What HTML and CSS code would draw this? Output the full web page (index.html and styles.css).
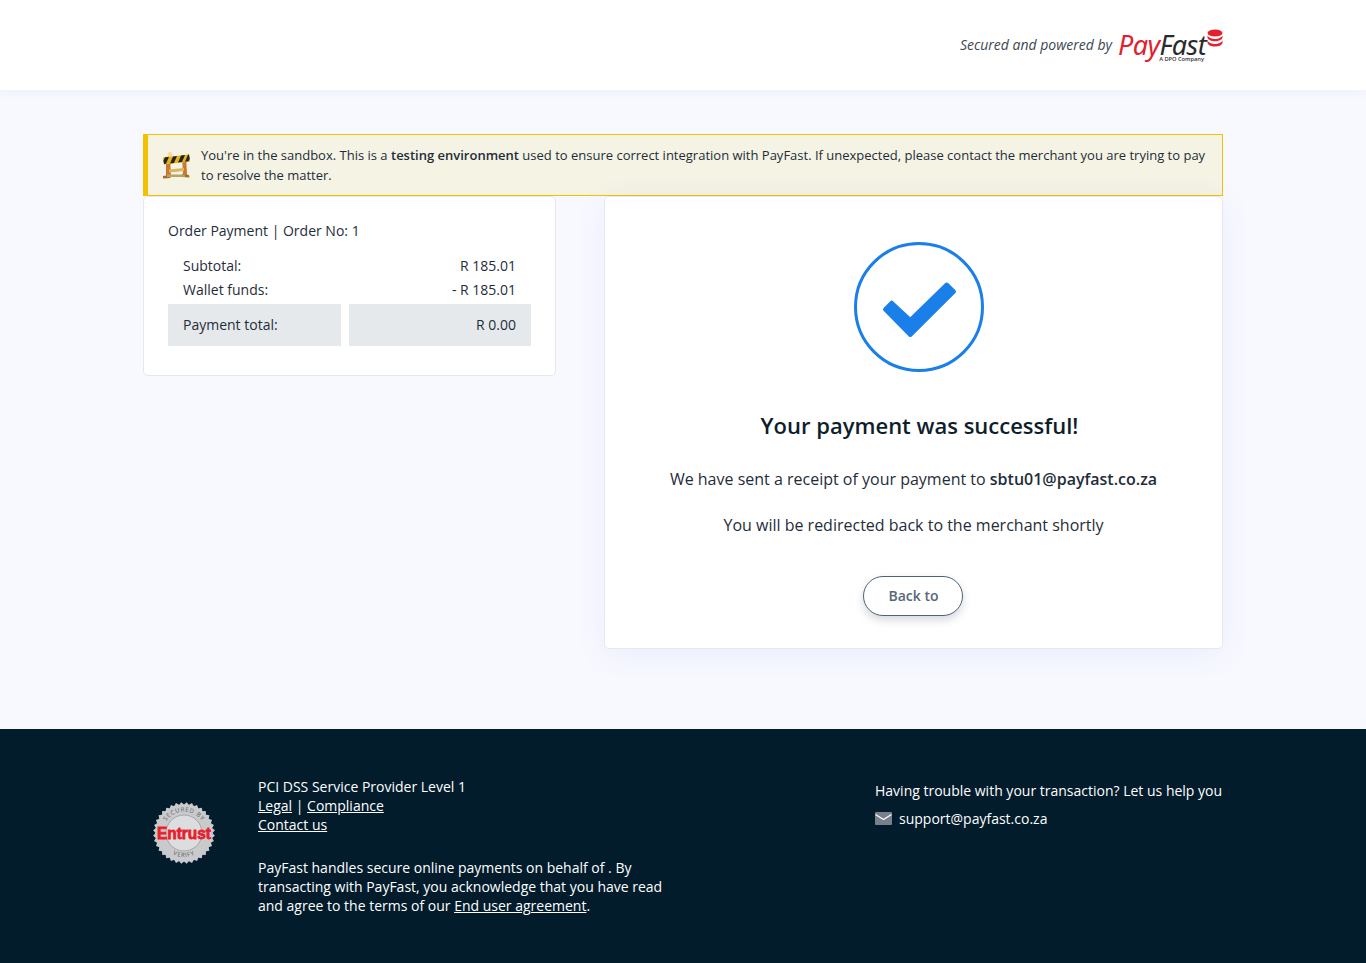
FILE: index.html
```html
<!DOCTYPE html>
<html lang="en">
<head>
    <meta charset="UTF-8">
    <meta name="viewport" content="width=device-width, initial-scale=1.0">
    <title>Payment successful</title>
    <link rel="stylesheet" href="styles.css">
</head>
<body>
    <header class="header">
        <div class="wrap header-inner">
            <span class="powered">Secured and powered by</span>
            <div class="logo">
                <div class="logo-top">
                    <span class="logo-pay">Pay</span><span class="logo-fast">Fast</span>
                    <svg class="logo-coins" width="16" height="19" viewBox="0 0 16 19">
                        <ellipse cx="8" cy="4" rx="7.5" ry="3.6" fill="#e2202f"/>
                        <path d="M.5 6.500c1 2.400 4 3.400 7.500 3.400s6.500-1 7.500-3.400v2c-.6 2.600-4 3.800-7.500 3.800S1.100 11.100.5 8.500z" fill="#e2202f"/>
                        <path d="M.5 11.500c1 2.400 4 3.400 7.500 3.400s6.500-1 7.500-3.400v2.500c-.8 2.500-4 3.500-7.500 3.500S1.300 16.500.5 14z" fill="#e2202f"/>
                    </svg>
                </div>
                <span class="logo-sub">A DPO Company</span>
            </div>
        </div>
    </header>

    <main class="main">
        <div class="wrap">
            <div class="alert">
                <svg class="alert-icon" width="30" height="28" viewBox="0 0 30 28">
                    <circle cx="9" cy="3.500" r="2.500" fill="#f6d9a6"/>
                    <path d="M5 6h4l1 19H5zM21 4h4l1 20h-4z" fill="#c9792f"/>
                    <path d="M2 6.500l26-3 1 7-26 3z" fill="#e3b421"/>
                    <path d="M4 6.300l4-.5-3 7-2 .2-.6-3.500zM12 5.400l4-.5-3 7-4 .5zM20 4.400l4-.4-3 7-4 .5zM27 3.600l1 .1.800 4-1.200 2.600-3.600.4z" fill="#2b2418"/>
                    <path d="M8 18.500l15-1.500v3l-15 1.500z" fill="#d9b65b"/>
                    <path d="M2 25l7-1 .5 3-7.500 .5zM28 24l-7-1-.5 3 8 .5z" fill="#a9682c"/>
                    <rect x="6" y="23.500" width="18" height="2.500" fill="#b9a35e"/>
                </svg>
                <p class="alert-text">You're in the sandbox. This is a <strong>testing environment</strong> used to ensure correct integration with PayFast. If unexpected, please contact the merchant you are trying to pay to resolve the matter.</p>
            </div>

            <div class="columns">
                <section class="card order">
                    <div class="order-title">Order Payment | Order No: 1</div>
                    <div class="order-row">
                        <span>Subtotal:</span>
                        <span>R 185.01</span>
                    </div>
                    <div class="order-row">
                        <span>Wallet funds:</span>
                        <span>- R 185.01</span>
                    </div>
                    <div class="order-total">
                        <div class="total-label">Payment total:</div>
                        <div class="total-value">R 0.00</div>
                    </div>
                </section>

                <section class="card result">
                    <svg class="check" width="130" height="130" viewBox="0 0 130 130">
                        <circle cx="65" cy="65" r="63.500" fill="none" stroke="#1a7fe8" stroke-width="3"/>
                        <path d="M31 67.300l6.700-6.600 18.600 17.300L92.700 42.500l7.300 7.200-43.700 43.300z" fill="#1a7fe8" stroke="#1a7fe8" stroke-width="4" stroke-linejoin="round"/>
                    </svg>
                    <h1 class="result-title">Your payment was successful!</h1>
                    <p class="result-text">We have sent a receipt of your payment to <strong>sbtu01@payfast.co.za</strong></p>
                    <p class="result-text redirect">You will be redirected back to the merchant shortly</p>
                    <a class="back-btn" href="#">Back to</a>
                </section>
            </div>
        </div>
    </main>

    <footer class="footer">
        <div class="wrap footer-inner">
            <svg class="seal" width="62" height="62" viewBox="0 0 62 62">
                <g transform="translate(31 31)" fill="#c9cacc">
                    <rect x="-21.900" y="-21.900" width="43.800" height="43.800"/>
                    <rect x="-21.900" y="-21.900" width="43.800" height="43.800" transform="rotate(10)"/>
                    <rect x="-21.900" y="-21.900" width="43.800" height="43.800" transform="rotate(20)"/>
                    <rect x="-21.900" y="-21.900" width="43.800" height="43.800" transform="rotate(30)"/>
                    <rect x="-21.900" y="-21.900" width="43.800" height="43.800" transform="rotate(40)"/>
                    <rect x="-21.900" y="-21.900" width="43.800" height="43.800" transform="rotate(50)"/>
                    <rect x="-21.900" y="-21.900" width="43.800" height="43.800" transform="rotate(60)"/>
                    <rect x="-21.900" y="-21.900" width="43.800" height="43.800" transform="rotate(70)"/>
                    <rect x="-21.900" y="-21.900" width="43.800" height="43.800" transform="rotate(80)"/>
                    <circle r="28"/>
                    <circle r="18" fill="#dcddde" stroke="#a4a6a8"/>
                </g>
                <path id="sealTop" d="M9.500 31a21.500 21.500 0 0 1 43 0" fill="none"/>
                <path id="sealBottom" d="M7 31a24 24 0 0 0 48 0" fill="none"/>
                <text class="seal-small"><textPath href="#sealTop" startOffset="50%" text-anchor="middle">SECURED BY</textPath></text>
                <text class="seal-small"><textPath href="#sealBottom" startOffset="50%" text-anchor="middle">VERIFY</textPath></text>
                <text class="seal-name" x="31" y="36.500" text-anchor="middle" textLength="54" lengthAdjust="spacingAndGlyphs">Entrust</text>
            </svg>
            <div class="footer-left">
                <p class="footer-links">PCI DSS Service Provider Level 1<br><a href="#">Legal</a> | <a href="#">Compliance</a><br><a href="#">Contact us</a></p>
                <p class="footer-note">PayFast handles secure online payments on behalf of . By transacting with PayFast, you acknowledge that you have read and agree to the terms of our <a href="#">End user agreement</a>.</p>
            </div>
            <div class="footer-right">
                <p class="help">Having trouble with your transaction? Let us help you</p>
                <p class="support">
                    <svg class="mail" width="17" height="13" viewBox="0 0 17 13">
                        <rect width="17" height="13" y="0" rx="1" fill="#76818b"/>
                        <path d="M.5 2.500L8.500 7.500l8-5" fill="none" stroke="#fff" stroke-width="1.200"/>
                    </svg>
                    support@payfast.co.za
                </p>
            </div>
        </div>
    </footer>
</body>
</html>
```

FILE: styles.css
```css
* {
    box-sizing: border-box;
}
body {
    margin: 0;
    font-family: "Open Sans", "Noto Sans", sans-serif;
    font-size: 14px;
    color: #1f2d3a;
    background-color: #f8f9ff;
}
p {
    margin: 0;
}
.wrap {
    width: 1080px;
    margin: 0 auto;
}
.header {
    height: 90px;
    background: #fff;
    box-shadow: 0 2px 10px rgba(40, 60, 120, 0.05);
}
.header-inner {
    display: flex;
    justify-content: flex-end;
    padding-top: 29px;
}
.powered {
    margin-top: 6px;
    margin-right: 7px;
    font-size: 14px;
    font-style: italic;
    color: #3c4853;
}
.logo {
    width: 104px;
    display: flex;
    flex-direction: column;
    align-items: flex-end;
}
.logo-top {
    display: flex;
    align-items: flex-start;
    height: 27px;
    font-family: "Noto Sans", sans-serif;
    font-size: 27px;
    font-style: italic;
    line-height: 31px;
    letter-spacing: -0.6px;
}
.logo-pay {
    color: #e2202f;
}
.logo-fast {
    color: #2a2a2e;
}
.logo-coins {
    margin-left: 1px;
}
.logo-sub {
    margin-top: 0;
    margin-right: 19px;
    font-size: 5.7px;
    line-height: 7px;
    font-weight: 600;
    color: #333;
}
.main {
    height: 639px;
    padding-top: 44px;
}
.alert {
    display: flex;
    align-items: center;
    height: 62px;
    padding: 0 12px 0 13px;
    background: #f4f3e4;
    border: 1px solid #f2c200;
    border-left-width: 5px;
}
.alert-icon {
    flex: none;
    margin-right: 10px;
}
.alert-text {
    font-size: 13px;
    line-height: 20px;
}
.alert-text strong {
    font-weight: 600;
}
.columns {
    display: flex;
    justify-content: space-between;
    align-items: flex-start;
}
.card {
    background: #fff;
    border: 1px solid #e6e8ee;
    border-radius: 5px;
}
.order {
    width: 413px;
    height: 180px;
    padding: 24px 24px 0;
}
.order-title {
    height: 33px;
    line-height: 19px;
}
.order-row {
    display: flex;
    justify-content: space-between;
    height: 24px;
    padding: 0 15px;
    line-height: 24px;
}
.order-total {
    display: flex;
    gap: 8px;
    height: 42px;
    margin-top: 2px;
    line-height: 42px;
}
.total-label {
    width: 173px;
    padding-left: 15px;
    background: #e6e9eb;
}
.total-value {
    width: 182px;
    padding-right: 15px;
    text-align: right;
    background: #e6e9eb;
}
.result {
    width: 619px;
    height: 453px;
    padding-top: 45px;
    text-align: center;
    box-shadow: 0 6px 30px rgba(60, 90, 200, 0.08);
}
.check {
    display: block;
    margin: 0 auto;
    transform: translateX(5px);
}
.result-title {
    margin: 37px 0 0;
    font-size: 22px;
    line-height: 32px;
    font-weight: 600;
    color: #0f1e2b;
    transform: translateX(6px);
}
.result-text {
    margin-top: 25px;
    font-size: 16px;
    line-height: 26px;
}
.result-text strong {
    font-weight: 600;
}
.redirect {
    margin-top: 20px;
}
.back-btn {
    display: block;
    width: 100px;
    height: 40px;
    margin: 38px 0 0 258px;
    padding-left: 1px;
    border: 1px solid #4f6478;
    border-radius: 20px;
    font-size: 14px;
    font-weight: 600;
    line-height: 38px;
    color: #56677a;
    text-decoration: none;
    background: #fff;
    box-shadow: 0 4px 8px rgba(50, 60, 90, 0.2);
}
.footer {
    height: 234px;
    background: #021c2c;
    color: #fff;
    font-size: 14px;
    line-height: 19px;
}
.footer a {
    color: #fff;
}
.footer-inner {
    display: flex;
    padding-top: 48px;
}
.seal {
    flex: none;
    margin: 25px 0 0 10px;
}
.seal-small {
    font-size: 6px;
    letter-spacing: 0.7px;
    fill: #55585b;
}
.seal-name {
    font-family: "Liberation Sans", sans-serif;
    font-size: 16px;
    font-weight: 700;
    fill: #e81e2b;
    stroke: #e81e2b;
    stroke-width: 0.8px;
}
.footer-left {
    width: 617px;
    margin-left: 43px;
}
.footer-note {
    width: 420px;
    margin-top: 24px;
}
.footer-right {
    padding-top: 4px;
}
.help {
    white-space: nowrap;
}
.support {
    display: flex;
    align-items: center;
    margin-top: 9px;
}
.mail {
    margin-right: 7px;
}
```
